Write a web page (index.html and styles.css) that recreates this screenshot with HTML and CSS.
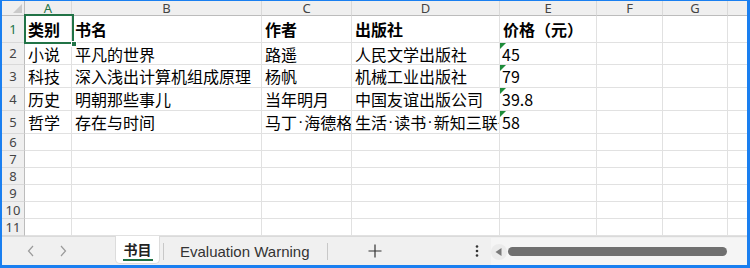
FILE: index.html
```html
<!DOCTYPE html>
<html lang="zh-CN">
<head>
  <meta charset="UTF-8">
  <title>书目</title>
  <link rel="stylesheet" href="styles.css">
</head>
<body>
  <div class="frame">
    <div class="sheet">
      <div class="grid">
        <div class="hd corner"><span class="corner-tri"></span></div>
        <div class="hd col sel">A</div>
        <div class="hd col">B</div>
        <div class="hd col">C</div>
        <div class="hd col">D</div>
        <div class="hd col">E</div>
        <div class="hd col">F</div>
        <div class="hd col">G</div>
        <div class="hd col last"></div>

        <div class="hd row sel">1</div>
        <div class="cell bold">类别</div>
        <div class="cell bold">书名</div>
        <div class="cell bold">作者</div>
        <div class="cell bold">出版社</div>
        <div class="cell bold">价格（元）</div>
        <div class="cell"></div>
        <div class="cell"></div>
        <div class="cell last"></div>

        <div class="hd row">2</div>
        <div class="cell">小说</div>
        <div class="cell">平凡的世界</div>
        <div class="cell">路遥</div>
        <div class="cell">人民文学出版社</div>
        <div class="cell num">45</div>
        <div class="cell"></div>
        <div class="cell"></div>
        <div class="cell last"></div>

        <div class="hd row">3</div>
        <div class="cell">科技</div>
        <div class="cell">深入浅出计算机组成原理</div>
        <div class="cell">杨帆</div>
        <div class="cell">机械工业出版社</div>
        <div class="cell num">79</div>
        <div class="cell"></div>
        <div class="cell"></div>
        <div class="cell last"></div>

        <div class="hd row">4</div>
        <div class="cell">历史</div>
        <div class="cell">明朝那些事儿</div>
        <div class="cell">当年明月</div>
        <div class="cell">中国友谊出版公司</div>
        <div class="cell num">39.8</div>
        <div class="cell"></div>
        <div class="cell"></div>
        <div class="cell last"></div>

        <div class="hd row">5</div>
        <div class="cell">哲学</div>
        <div class="cell">存在与时间</div>
        <div class="cell">马丁<span class="dot">·</span>海德格尔</div>
        <div class="cell">生活<span class="dot">·</span>读书<span class="dot">·</span>新知三联书店</div>
        <div class="cell num">58</div>
        <div class="cell"></div>
        <div class="cell"></div>
        <div class="cell last"></div>

        <div class="hd row">6</div>
        <div class="cell"></div><div class="cell"></div><div class="cell"></div><div class="cell"></div>
        <div class="cell"></div><div class="cell"></div><div class="cell"></div><div class="cell last"></div>

        <div class="hd row">7</div>
        <div class="cell"></div><div class="cell"></div><div class="cell"></div><div class="cell"></div>
        <div class="cell"></div><div class="cell"></div><div class="cell"></div><div class="cell last"></div>

        <div class="hd row">8</div>
        <div class="cell"></div><div class="cell"></div><div class="cell"></div><div class="cell"></div>
        <div class="cell"></div><div class="cell"></div><div class="cell"></div><div class="cell last"></div>

        <div class="hd row">9</div>
        <div class="cell"></div><div class="cell"></div><div class="cell"></div><div class="cell"></div>
        <div class="cell"></div><div class="cell"></div><div class="cell"></div><div class="cell last"></div>

        <div class="hd row">10</div>
        <div class="cell"></div><div class="cell"></div><div class="cell"></div><div class="cell"></div>
        <div class="cell"></div><div class="cell"></div><div class="cell"></div><div class="cell last"></div>

        <div class="hd row">11</div>
        <div class="cell"></div><div class="cell"></div><div class="cell"></div><div class="cell"></div>
        <div class="cell"></div><div class="cell"></div><div class="cell"></div><div class="cell last"></div>
      </div>
      <div class="selection"><span class="handle"></span></div>
    </div>

    <div class="tabbar">
      <span class="nav-btn first">
        <svg width="10" height="12" viewBox="0 0 10 12"><path d="M7 1 L2.5 6 L7 11" fill="none" stroke="#9a9a9a" stroke-width="1.2"/></svg>
      </span>
      <span class="nav-btn">
        <svg width="10" height="12" viewBox="0 0 10 12"><path d="M3 1 L7.5 6 L3 11" fill="none" stroke="#9a9a9a" stroke-width="1.2"/></svg>
      </span>
      <span class="tab active"><span class="tab-label">书目</span></span>
      <span class="sep"></span>
      <span class="tab">Evaluation Warning</span>
      <span class="sep second"></span>
      <span class="plus">
        <svg width="14" height="14" viewBox="0 0 14 14"><path d="M7 0.5 V13.5 M0.5 7 H13.5" stroke="#333" stroke-width="1.2"/></svg>
      </span>
      <span class="more">
        <svg width="4" height="14" viewBox="0 0 4 14"><circle cx="2" cy="2.5" r="1.3" fill="#333"/><circle cx="2" cy="7" r="1.3" fill="#333"/><circle cx="2" cy="11.5" r="1.3" fill="#333"/></svg>
      </span>
      <div class="hscroll">
        <span class="arrow">
          <svg width="7" height="8" viewBox="0 0 7 8"><path d="M6.5 0 V8 L0.5 4 Z" fill="#7a7a7a"/></svg>
        </span>
        <span class="thumb"></span>
      </div>
    </div>
  </div>
</body>
</html>
```

FILE: styles.css
```css
* {
  box-sizing: border-box;
}
body {
  margin: 0;
  background: #fff;
}
.frame {
  width: 750px;
  height: 268px;
  border-style: solid;
  border-color: #1a7ff0;
  border-width: 1px 3px 3px 2px;
  display: flex;
  flex-direction: column;
  overflow: hidden;
}
.sheet {
  position: relative;
  height: 235px;
}
.grid {
  display: grid;
  grid-template-columns: 23px 47px 190px 90px 148px 97px 66px 65px 19px;
  grid-template-rows: 15px 27px 22px 23px 23px 23px repeat(6, 17px);
}
.hd {
  background: #efefef;
  color: #444;
  font-family: "Noto Sans", "Liberation Sans", sans-serif;
  font-size: 13px;
  display: flex;
  align-items: center;
  justify-content: center;
  border-right: 1px solid #d9d9d9;
  border-bottom: 1px solid #d9d9d9;
}
.hd.col {
  border-bottom-color: #bcbcbc;
  line-height: 1;
}
.hd.row {
  border-right-color: #bcbcbc;
  line-height: 1;
}
.hd.corner {
  border-right-color: #bcbcbc;
  border-bottom-color: #bcbcbc;
  position: relative;
}
.corner-tri {
  position: absolute;
  right: 2px;
  bottom: 2px;
  width: 0;
  height: 0;
  border-left: 9px solid transparent;
  border-bottom: 9px solid #cacaca;
}
.hd.sel {
  color: #217346;
}
.hd.last,
.cell.last {
  border-right: none;
}
.cell {
  border-right: 1px solid #e1e1e1;
  border-bottom: 1px solid #e1e1e1;
  font-family: "Noto Sans CJK SC", sans-serif;
  font-size: 16px;
  color: #000;
  padding-left: 3px;
  white-space: nowrap;
  overflow: hidden;
  display: flex;
  align-items: center;
}
.cell .dot {
  font-family: "Liberation Sans", sans-serif;
  padding: 0 1px;
}
.cell.bold {
  font-weight: bold;
}
.cell.num {
  position: relative;
  padding-left: 2px;
}
.cell.num::before {
  content: "";
  position: absolute;
  left: 0;
  top: 0;
  border-top: 6px solid #1e8c3a;
  border-right: 6px solid transparent;
}
.selection {
  position: absolute;
  left: 22px;
  top: 13px;
  width: 50px;
  height: 30px;
  border: 2px solid #217346;
}
.handle {
  position: absolute;
  right: -5px;
  bottom: -5px;
  width: 6px;
  height: 6px;
  background: #217346;
  border: 1px solid #fff;
}
.tabbar {
  height: 29px;
  background: #f0f0f0;
  border-top: 1px solid #dadada;
  display: flex;
  align-items: center;
  font-family: "Liberation Sans", sans-serif;
  font-size: 15px;
  color: #333;
}
.nav-btn {
  width: 32px;
  display: flex;
  justify-content: center;
}
.nav-btn.first {
  margin-left: 13px;
}
.tab {
  margin-left: 16px;
  white-space: nowrap;
}
.tab.active {
  margin-left: 36px;
  width: 45px;
  align-self: flex-start;
  height: 28px;
  margin-top: -1px;
  background: #fff;
  border: 1px solid #dcdcdc;
  border-top: none;
  border-radius: 0 0 5px 5px;
  display: flex;
  justify-content: center;
  align-items: center;
  padding-top: 1px;
}
.tab-label {
  font-family: "Noto Sans CJK SC", sans-serif;
  font-weight: bold;
  font-size: 14px;
  color: #222;
  border-bottom: 2px solid #1e7145;
  padding: 0 1px 1px;
  line-height: 18px;
}
.sep {
  margin-left: 3px;
  width: 1px;
  height: 17px;
  background: #c8c8c8;
}
.sep.second {
  margin-left: 17px;
}
.plus {
  margin-left: 40px;
  display: flex;
}
.more {
  margin-left: 93px;
  display: flex;
}
.hscroll {
  margin-left: 12px;
  flex: 1;
  align-self: stretch;
  margin-top: 1px;
  background: #f5f5f5;
  display: flex;
  align-items: center;
  padding-right: 20px;
}
.arrow {
  width: 16px;
  height: 16px;
  border-radius: 50%;
  background: #ebebeb;
  display: flex;
  align-items: center;
  justify-content: center;
}
.thumb {
  margin-left: 1px;
  flex: 1;
  height: 9px;
  border-radius: 5px;
  background: #707070;
}
```
